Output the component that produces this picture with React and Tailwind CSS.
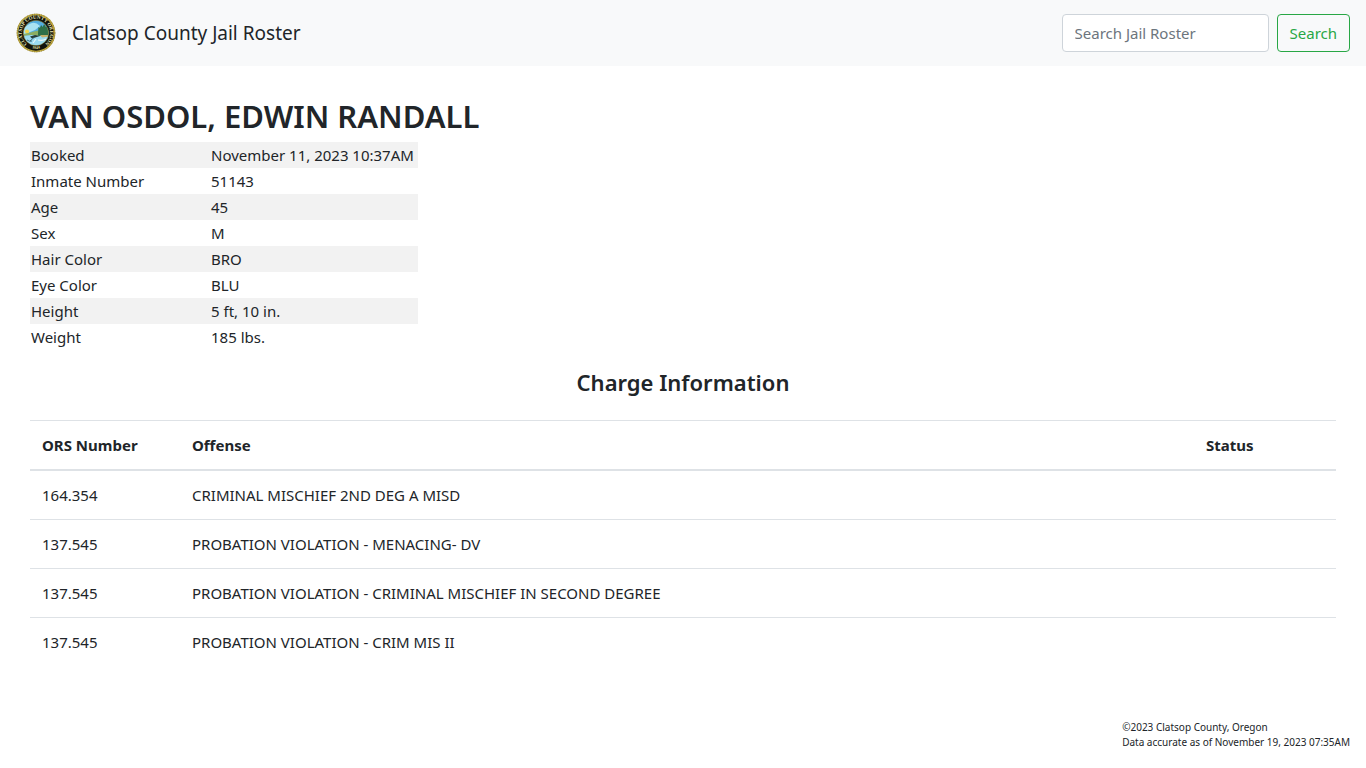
import React from 'react';

const details = [
  ['Booked', 'November 11, 2023 10:37AM'],
  ['Inmate Number', '51143'],
  ['Age', '45'],
  ['Sex', 'M'],
  ['Hair Color', 'BRO'],
  ['Eye Color', 'BLU'],
  ['Height', '5 ft, 10 in.'],
  ['Weight', '185 lbs.'],
];

const charges = [
  ['164.354', 'CRIMINAL MISCHIEF 2ND DEG A MISD'],
  ['137.545', 'PROBATION VIOLATION - MENACING- DV'],
  ['137.545', 'PROBATION VIOLATION - CRIMINAL MISCHIEF IN SECOND DEGREE'],
  ['137.545', 'PROBATION VIOLATION - CRIM MIS II'],
];

function Seal() {
  return (
    <svg viewBox="0 0 40 40" className="size-10 shrink-0" aria-hidden="true">
      <defs>
        <clipPath id="scene">
          <circle cx="20" cy="20" r="12.4" />
        </clipPath>
        <path id="upper-arc" d="M9.8 29.8 A14.2 14.2 0 1 1 30.2 29.8" />
        <path id="lower-arc" d="M8 31 A17 17 0 0 0 32 31" />
      </defs>
      <circle cx="20" cy="20" r="19.3" fill="#c4ad40" />
      <circle cx="20" cy="20" r="18.9" fill="none" stroke="#7d702c" strokeWidth="0.9" strokeDasharray="0.9 0.9" />
      <circle cx="20" cy="20" r="17.7" fill="#11130d" />
      <text className="font-['Liberation_Serif',serif] text-[5px] font-bold" fill="#f0e8b4" textAnchor="middle">
        <textPath href="#upper-arc" startOffset="50%">CLATSOP COUNTY OREGON</textPath>
      </text>
      <text className="font-['Liberation_Serif',serif] text-[4px] font-bold" fill="#f0e8b4" textAnchor="middle">
        <textPath href="#lower-arc" startOffset="50%">1844</textPath>
      </text>
      <g clipPath="url(#scene)">
        <rect x="7" y="7" width="26" height="26" fill="#54aee0" />
        <path d="M7 16q5-5 9-6t8 3l-5 4-12 5z" fill="#a9e2f2" />
        <circle cx="11" cy="18.5" r="2" fill="#f3d64b" />
        <path d="M7 21l6-1 5-1.5 5-1 10-2v7l-10 1-8-1-8 .5z" fill="#8cae62" />
        <path d="M22 20l.5-6 1.4 1 1.2-3 1.4 2 1.7-3 1.6 3 1.2-1 3 8v2H22z" fill="#2f7048" />
        <path d="M7 23l9-1 8 1 9-1v10H7z" fill="#9bdcf1" />
        <path d="M14 23.5l5-1.5 5 1-4 1.2-4 1.3z" fill="#263c3a" />
        <path d="M18 24.5l-4 3.5M11 27q3 2 5 1" fill="none" stroke="#39657a" strokeWidth="0.9" />
        <path d="M20 26l-3 4M22 27q5 1 8-1" fill="none" stroke="#eef8f9" strokeWidth="1.1" />
        <path d="M24 22h9v1.6l-7 .8z" fill="#c5b16b" />
        <path d="M7 30q13 5 26 0v4H7z" fill="#11130d" />
      </g>
      <circle cx="20" cy="20" r="12.7" fill="none" stroke="#a69336" strokeWidth="0.5" />
    </svg>
  );
}

export default function App() {
  return (
    <div className="flex min-h-screen flex-col bg-white font-['Noto_Sans','Open_Sans',sans-serif] text-[15px] leading-6 text-[#212529]">
      <nav className="flex flex-wrap items-center justify-between gap-y-2 bg-[#f8f9fa] px-4 py-[13px]">
        <a href="#" className="flex items-center gap-4 text-[19px] text-[#212529]">
          <Seal />
          Clatsop County Jail Roster
        </a>
        <form className="flex gap-2" onSubmit={(e) => e.preventDefault()}>
          <input
            type="search"
            aria-label="Search Jail Roster"
            placeholder="Search Jail Roster"
            className="h-[38px] w-[207px] rounded border border-[#ced4da] bg-white px-3 placeholder:text-[#6c757d]"
          />
          <button type="submit" className="h-[38px] rounded border border-[#28a745] px-3 text-[#28a745]">
            Search
          </button>
        </form>
      </nav>

      <main className="px-[30px] pt-[31px]">
        <h1 className="mb-[7px] text-[31px] leading-[38px] font-semibold">VAN OSDOL, EDWIN RANDALL</h1>
        <table className="mb-[18px] w-[388px] table-fixed">
          <tbody>
            {details.map(([label, value]) => (
              <tr key={label} className="odd:bg-[#f2f2f2]">
                <th scope="row" className="w-[180px] p-px text-left font-normal">{label}</th>
                <td className="p-px whitespace-nowrap">{value}</td>
              </tr>
            ))}
          </tbody>
        </table>

        <h2 className="mb-6 text-center text-[22px] leading-7 font-semibold">Charge Information</h2>
        <table className="w-full table-fixed text-left">
          <thead>
            <tr className="border-t border-b-2 border-[#dee2e6]">
              <th scope="col" className="w-[150px] p-3 font-bold">ORS Number</th>
              <th scope="col" className="p-3 font-bold">Offense</th>
              <th scope="col" className="w-[142px] p-3 font-bold">Status</th>
            </tr>
          </thead>
          <tbody>
            {charges.map(([ors, offense]) => (
              <tr key={offense} className="border-b border-[#dee2e6] last:border-b-0">
                <td className="p-3">{ors}</td>
                <td className="p-3">{offense}</td>
                <td className="p-3"></td>
              </tr>
            ))}
          </tbody>
        </table>
      </main>

      <footer className="mt-auto flex justify-end px-4 pt-8 pb-[18px] text-[10px] leading-[15px]">
        <p>
          ©2023 Clatsop County, Oregon
          <br />
          Data accurate as of November 19, 2023 07:35AM
        </p>
      </footer>
    </div>
  );
}
